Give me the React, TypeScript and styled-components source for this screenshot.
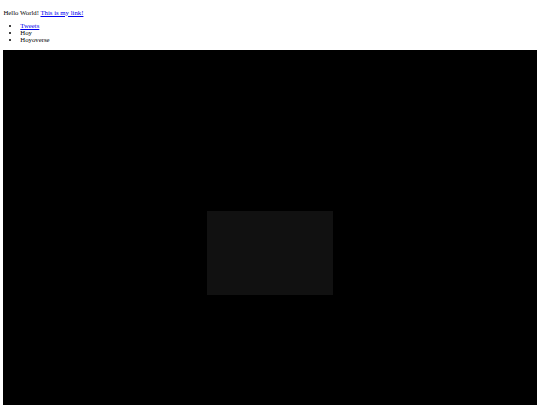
import styled, { createGlobalStyle } from 'styled-components';

// the page reads as a 1280x960 document shrunk to fit 540x405
const GlobalStyle = createGlobalStyle`
  body {
    margin: 3.4px;
    background: #ffffff;
    color: #000000;
    font-family: 'Liberation Serif', 'Times New Roman', serif;
    font-size: 6.75px;
  }
`;

const Intro = styled.p`
  margin: 5.2px 0 6.75px;
`;

const Link = styled.a`
  color: #0000ee;
  text-decoration: underline;
`;

const Menu = styled.ul`
  margin: 6.75px 0;
  padding-left: 16.9px;
  list-style: disc;
`;

const MenuItem = styled.li`
  line-height: normal;
`;

const Stage = styled.div`
  display: flex;
  align-items: center;
  justify-content: center;
  height: 405px;
  background: #000000;
`;

const Viewport = styled.div`
  width: 126px;
  height: 84px;
  background: #111111;
`;

const items: { label: string; href?: string }[] = [
  { label: 'Tweets', href: '#tweets' },
  { label: 'Hoy' },
  { label: 'Hoyoverse' },
];

export default function App() {
  return (
    <>
      <GlobalStyle />
      <Intro>
        Hello World! <Link href="#link">This is my link!</Link>
      </Intro>
      <Menu>
        {items.map((item) => (
          <MenuItem key={item.label}>
            {item.href ? <Link href={item.href}>{item.label}</Link> : item.label}
          </MenuItem>
        ))}
      </Menu>
      <Stage>
        <Viewport />
      </Stage>
    </>
  );
}
